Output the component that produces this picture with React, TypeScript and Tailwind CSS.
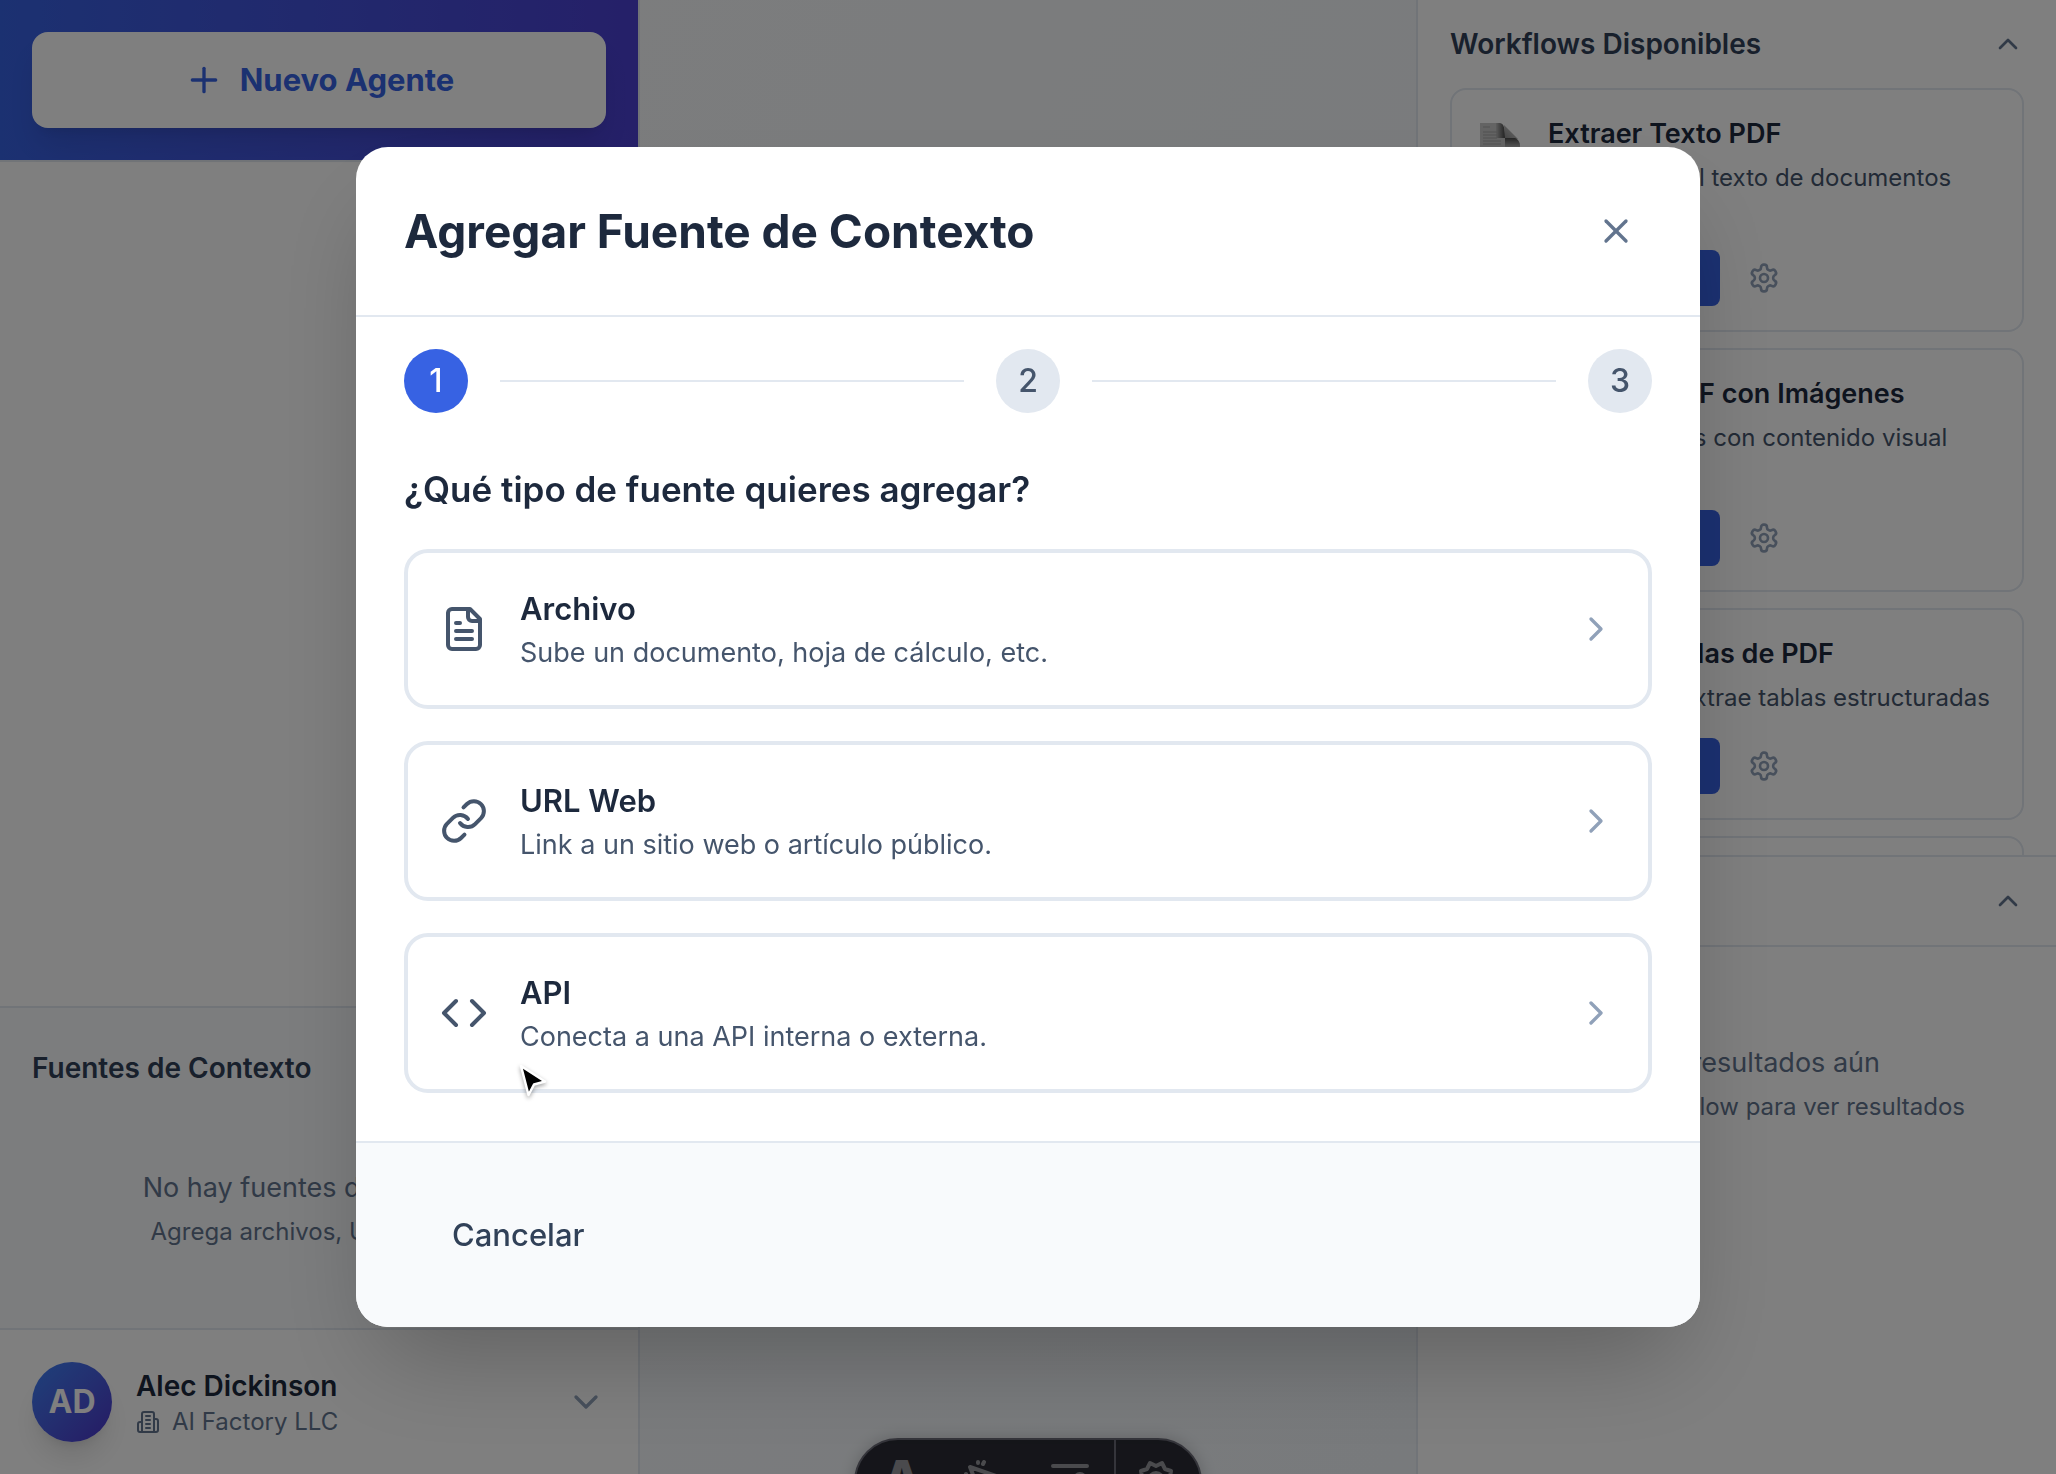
import React from "react";
import { Plus, X, Link, Code, ChevronRight, ChevronUp, ChevronDown } from "lucide-react";

type IconProps = { className?: string };

function StrokeIcon({ className, children }: IconProps & { children: React.ReactNode }) {
  return (
    <svg viewBox="0 0 24 24" className={className} fill="none" stroke="currentColor" strokeWidth="2" strokeLinecap="round" strokeLinejoin="round" aria-hidden="true">
      {children}
    </svg>
  );
}

function FileIcon({ className }: IconProps) {
  return (
    <StrokeIcon className={className}>
      <path d="M15 2H6a2 2 0 0 0-2 2v16a2 2 0 0 0 2 2h12a2 2 0 0 0 2-2V7Z" />
      <path d="M14 2v4a2 2 0 0 0 2 2h4M10 9H8M16 13H8M16 17H8" />
    </StrokeIcon>
  );
}

function GearIcon({ className }: IconProps) {
  return (
    <StrokeIcon className={className}>
      <path d="M12.22 2h-.44a2 2 0 0 0-2 2v.18a2 2 0 0 1-1 1.73l-.43.25a2 2 0 0 1-2 0l-.15-.08a2 2 0 0 0-2.73.73l-.22.38a2 2 0 0 0 .73 2.73l.15.1a2 2 0 0 1 1 1.72v.51a2 2 0 0 1-1 1.74l-.15.09a2 2 0 0 0-.73 2.73l.22.38a2 2 0 0 0 2.73.73l.15-.08a2 2 0 0 1 2 0l.43.25a2 2 0 0 1 1 1.73V20a2 2 0 0 0 2 2h.44a2 2 0 0 0 2-2v-.18a2 2 0 0 1 1-1.73l.43-.25a2 2 0 0 1 2 0l.15.08a2 2 0 0 0 2.73-.73l.22-.39a2 2 0 0 0-.73-2.73l-.15-.08a2 2 0 0 1-1-1.74v-.5a2 2 0 0 1 1-1.74l.15-.09a2 2 0 0 0 .73-2.73l-.22-.38a2 2 0 0 0-2.73-.73l-.15.08a2 2 0 0 1-2 0l-.43-.25a2 2 0 0 1-1-1.73V4a2 2 0 0 0-2-2z" />
      <circle cx="12" cy="12" r="3" />
    </StrokeIcon>
  );
}

function BuildingIcon({ className }: IconProps) {
  return (
    <StrokeIcon className={className}>
      <path d="M6 22V4a2 2 0 0 1 2-2h8a2 2 0 0 1 2 2v18Z" />
      <path d="M6 12H4a2 2 0 0 0-2 2v6a2 2 0 0 0 2 2h2M18 9h2a2 2 0 0 1 2 2v9a2 2 0 0 1-2 2h-2" />
      <path d="M10 6h4M10 10h4M10 14h4M10 18h4" />
    </StrokeIcon>
  );
}

function PageIcon() {
  return (
    <svg viewBox="0 0 48 48" className="size-12 shrink-0" aria-hidden="true">
      <defs>
        <linearGradient id="curl" x1="0" y1="1" x2="1" y2="0">
          <stop offset="0" stopColor="#888" />
          <stop offset="1" stopColor="#dcdcdc" />
        </linearGradient>
        <linearGradient id="fold" x1="0" y1="0" x2="1" y2="0">
          <stop offset="0" stopColor="#bbb" />
          <stop offset="1" stopColor="#484848" />
        </linearGradient>
        <linearGradient id="under" x1="0" y1="0" x2="0" y2="1">
          <stop offset="0" stopColor="#4c4c4c" />
          <stop offset="1" stopColor="#b0b0b0" />
        </linearGradient>
      </defs>
      <path d="M4 9h19l8 14 13 6v18H4z" fill="#c8c8c8" />
      <path d="M20 9h4c4 1 5 5 5 15h-9z" fill="url(#fold)" />
      <path d="M28 11L42 25H29z" fill="url(#curl)" />
      <path d="M29 24h10c3 1 5 4 5 9H29z" fill="url(#under)" />
      <path d="M7 13h7M7 18h14M7 21h14M7 24h14M7 27h18M7 30h18" stroke="#a6a6a6" strokeWidth="1" />
    </svg>
  );
}

function PointerIcon() {
  return (
    <svg viewBox="0 0 32 36" className="absolute top-[915px] left-[161px] w-8 drop-shadow-[0_2px_2px_rgba(0,0,0,0.35)]" aria-hidden="true">
      <path d="M4 4L11.500 33L17 22.500L28 19.500Z" fill="#000" stroke="#fff" strokeWidth="2.500" strokeLinejoin="round" />
    </svg>
  );
}

const workflows = [
  { title: "Extraer Texto PDF", lines: ["Extrae todo el texto de documentos", "PDF"] },
  { title: "Analizar PDF con Imágenes", lines: ["Procesa PDFs con contenido visual", "y gráficos"] },
  { title: "Extraer Tablas de PDF", lines: ["Identifica y extrae tablas estructuradas"] },
];

const sources = [
  { icon: FileIcon, title: "Archivo", text: "Sube un documento, hoja de cálculo, etc." },
  { icon: Link, title: "URL Web", text: "Link a un sitio web o artículo público." },
  { icon: Code, title: "API", text: "Conecta a una API interna o externa." },
];

function WorkflowCard({ title, lines }: { title: string; lines: string[] }) {
  return (
    <article className="flex shrink-0 gap-6 rounded-2xl border-2 border-slate-200 p-6">
      <PageIcon />
      <div className="min-w-0 flex-1">
        <h3 className="text-[27px] leading-10 font-semibold text-slate-800">{title}</h3>
        <p className="mt-2 text-2xl text-slate-600">
          {lines.map((l) => (
            <span key={l} className="block">{l}</span>
          ))}
        </p>
        <div className="mt-6 flex items-center gap-4">
          <button className="h-14 w-[172px] rounded-lg bg-[#3762e3] text-2xl text-white">Ejecutar</button>
          <button aria-label="Configurar" className="p-3 text-slate-400">
            <GearIcon className="size-8" />
          </button>
        </div>
      </div>
    </article>
  );
}

function Step({ n, active }: { n: number; active?: boolean }) {
  return (
    <span
      className={
        active
          ? "flex size-16 items-center justify-center rounded-full bg-[#3762e3] text-[32px] font-medium text-white"
          : "flex size-16 items-center justify-center rounded-full bg-slate-200 text-[32px] font-medium text-slate-600"
      }
    >
      {n}
    </span>
  );
}

function Toolbar() {
  return (
    <div className="absolute -bottom-13 left-1/2 flex h-[88px] w-[348px] -translate-x-1/2 rounded-full border-2 border-[#6a6a76] bg-[#2a2b34] pl-1 text-[#94959a] shadow-[0_0_16px_rgba(0,0,0,0.2)]">
      <button aria-label="Texto" className="flex w-21 items-start justify-center pt-3 text-[44px] leading-12 font-black">
        A
      </button>
      <button aria-label="Puntero" className="flex w-21 items-start justify-center pt-5">
        <svg viewBox="0 0 44 44" className="size-11" fill="none" stroke="currentColor" strokeWidth="4" strokeLinecap="round" strokeLinejoin="round" aria-hidden="true">
          <path d="M6 7L38 18L24 24L18 38Z" />
          <path d="M14 2v1M20 2l-1 2M1 15l1-1" />
        </svg>
      </button>
      <button aria-label="Ajustes" className="flex w-21 items-start justify-center pt-5">
        <svg viewBox="0 0 44 44" className="size-11" fill="none" stroke="currentColor" strokeWidth="4" strokeLinecap="round" aria-hidden="true">
          <path d="M5 6h34M5 20h20" />
          <circle cx="32" cy="19" r="5" />
        </svg>
      </button>
      <button aria-label="Configuración" className="ml-0.5 flex flex-1 items-start border-l-2 border-[#6a6a76] pt-5 pl-5">
        <svg viewBox="0 0 40 40" className="size-10" fill="none" stroke="currentColor" strokeWidth="4" strokeLinejoin="round" aria-hidden="true">
          <path d="M14 3L20 6L26 3L29 9L35 11L34 17L37 21L33 26L33 32L26 33L20 37L14 33L7 32L7 26L3 21L6 17L5 11L11 9Z" />
          <circle cx="20" cy="20" r="7" />
        </svg>
      </button>
    </div>
  );
}

export default function App() {
  return (
    <div className="relative flex h-screen overflow-hidden bg-white font-['Inter',sans-serif]">
      <aside className="flex w-[640px] shrink-0 flex-col border-r-2 border-slate-200 bg-white">
        <div className="border-b-2 border-slate-200">
          <div className="bg-linear-to-r from-[#3762e3] to-[#4b40d2] p-8">
            <button className="flex h-24 w-full items-center justify-center gap-4 rounded-2xl bg-white text-[31px] font-bold text-[#3762e3] shadow-[0_20px_30px_-6px_rgba(0,0,0,0.1),0_8px_12px_-8px_rgba(0,0,0,0.1)]">
              <Plus className="size-10" />
              Nuevo Agente
            </button>
          </div>
        </div>
        <div className="flex-1" />
        <section className="border-t-2 border-slate-200 bg-slate-50 p-8">
          <div className="flex h-14 items-center">
            <h2 className="text-[28px] leading-10 font-semibold text-slate-700">Fuentes de Contexto</h2>
          </div>
          <div className="mt-6 py-12 text-center text-slate-500">
            <p className="text-[27px] leading-10">No hay fuentes de contexto</p>
            <p className="mt-2 text-2xl">Agrega archivos, URLs o APIs</p>
          </div>
        </section>
        <footer className="flex items-center gap-6 border-t-2 border-slate-200 p-8">
          <span className="flex size-20 items-center justify-center rounded-full bg-linear-to-br from-[#3b82f6] to-[#4b32c8] text-[32px] font-bold text-white shadow-[0_20px_30px_-6px_rgba(0,0,0,0.12),0_8px_12px_-8px_rgba(0,0,0,0.12)]">
            AD
          </span>
          <div className="flex-1">
            <p className="text-[28px] leading-10 font-semibold text-slate-800">Alec Dickinson</p>
            <p className="flex items-center gap-3 text-2xl text-slate-500">
              <BuildingIcon className="size-6" />
              AI Factory LLC
            </p>
          </div>
          <button aria-label="Abrir menú de usuario" className="text-slate-400">
            <ChevronDown className="size-10" />
          </button>
        </footer>
      </aside>

      <main className="relative min-w-0 flex-1 bg-linear-to-br from-slate-50 to-slate-100">
        <Toolbar />
      </main>

      <aside className="flex w-[640px] shrink-0 flex-col border-l-2 border-slate-200 bg-white">
        <section className="flex min-h-0 flex-[856_1_0%] flex-col overflow-hidden px-8">
          <header className="flex shrink-0 items-center justify-between py-6">
            <h2 className="text-[28px] leading-10 font-semibold text-slate-700">Workflows Disponibles</h2>
            <button aria-label="Contraer workflows" className="text-slate-500">
              <ChevronUp className="size-8" />
            </button>
          </header>
          <div className="flex flex-col gap-4">
            {workflows.map((w) => (
              <WorkflowCard key={w.title} {...w} />
            ))}
            <div className="h-20 shrink-0 rounded-2xl border-2 border-slate-200" />
          </div>
        </section>
        <section className="min-h-0 flex-[618_1_0%] border-t-2 border-slate-200">
          <header className="flex items-center justify-between border-b-2 border-slate-200 px-8 py-6">
            <h2 className="text-[28px] leading-10 font-semibold text-slate-700">Resultados</h2>
            <button aria-label="Contraer resultados" className="text-slate-500">
              <ChevronUp className="size-8" />
            </button>
          </header>
          <div className="px-8 py-24 text-center text-slate-500">
            <p className="text-[27px] leading-10">No hay resultados aún</p>
            <p className="mt-2 text-2xl">Ejecuta un workflow para ver resultados</p>
          </div>
        </section>
      </aside>

      <div className="fixed inset-0 flex items-center justify-center bg-black/50 p-8">
        <div role="dialog" aria-modal="true" aria-labelledby="dialog-title" className="relative w-full max-w-[1344px] overflow-hidden rounded-[32px] bg-white shadow-[0_50px_100px_-24px_rgba(0,0,0,0.25)]">
          <header className="flex items-center justify-between border-b-2 border-slate-200 p-12">
            <h1 id="dialog-title" className="text-[46px] leading-14 font-bold text-slate-800">Agregar Fuente de Contexto</h1>
            <button aria-label="Cerrar" className="p-4 text-slate-500">
              <X className="size-10" />
            </button>
          </header>
          <div className="flex items-center gap-8 px-12 pt-8">
            <Step n={1} active />
            <div className="h-0.5 flex-1 bg-slate-200" />
            <Step n={2} />
            <div className="h-0.5 flex-1 bg-slate-200" />
            <Step n={3} />
          </div>
          <div className="p-12">
            <h2 className="text-[35px] leading-14 font-semibold text-slate-800">¿Qué tipo de fuente quieres agregar?</h2>
            <div className="mt-8 flex flex-col gap-8">
              {sources.map(({ icon: Icon, title, text }) => (
                <button key={title} className="flex w-full items-center gap-8 rounded-3xl border-4 border-slate-200 p-8 text-left">
                  <Icon className="size-12 text-slate-600" />
                  <span className="flex-1">
                    <span className="block text-[31px] leading-12 font-semibold text-slate-800">{title}</span>
                    <span className="block text-[27px] leading-10 text-slate-600">{text}</span>
                  </span>
                  <ChevronRight className="size-10 text-slate-400" />
                </button>
              ))}
            </div>
          </div>
          <footer className="border-t-2 border-slate-200 bg-slate-50 p-12">
            <button className="px-12 py-5 text-[31px] leading-12 font-medium text-slate-700">Cancelar</button>
          </footer>
          <PointerIcon />
        </div>
      </div>
    </div>
  );
}
